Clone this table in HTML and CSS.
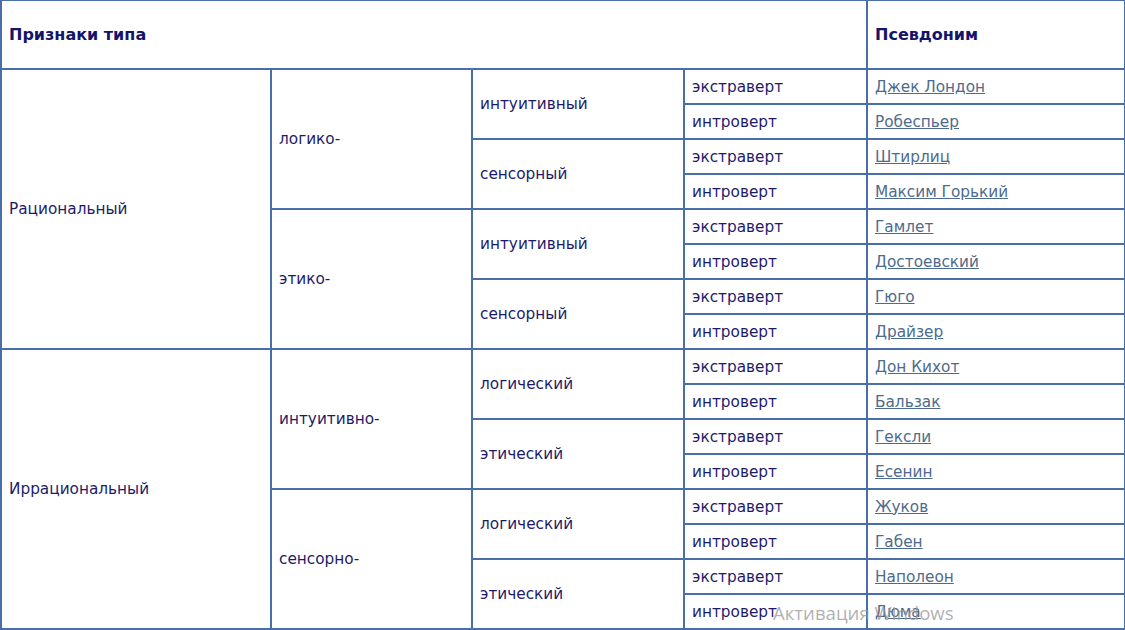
FILE: index.html
```html
<!DOCTYPE html>
<html lang="ru">
<head>
<meta charset="utf-8">
<link rel="stylesheet" href="styles.css">
</head>
<body>
<table class="types">
  <colgroup>
    <col class="c1"><col class="c2"><col class="c3"><col class="c4"><col class="c5">
  </colgroup>
  <tr class="head">
    <th colspan="4">Признаки типа</th>
    <th>Псевдоним</th>
  </tr>
  <tr>
    <td rowspan="8">Рациональный</td>
    <td rowspan="4">логико-</td>
    <td rowspan="2">интуитивный</td>
    <td>экстраверт</td><td><a href="#">Джек Лондон</a></td>
  </tr>
  <tr><td>интроверт</td><td><a href="#">Робеспьер</a></td></tr>
  <tr><td rowspan="2">сенсорный</td><td>экстраверт</td><td><a href="#">Штирлиц</a></td></tr>
  <tr><td>интроверт</td><td><a href="#">Максим Горький</a></td></tr>
  <tr><td rowspan="4">этико-</td><td rowspan="2">интуитивный</td><td>экстраверт</td><td><a href="#">Гамлет</a></td></tr>
  <tr><td>интроверт</td><td><a href="#">Достоевский</a></td></tr>
  <tr><td rowspan="2">сенсорный</td><td>экстраверт</td><td><a href="#">Гюго</a></td></tr>
  <tr><td>интроверт</td><td><a href="#">Драйзер</a></td></tr>
  <tr>
    <td rowspan="8">Иррациональный</td>
    <td rowspan="4">интуитивно-</td>
    <td rowspan="2">логический</td>
    <td>экстраверт</td><td><a href="#">Дон Кихот</a></td>
  </tr>
  <tr><td>интроверт</td><td><a href="#">Бальзак</a></td></tr>
  <tr><td rowspan="2">этический</td><td>экстраверт</td><td><a href="#">Гексли</a></td></tr>
  <tr><td>интроверт</td><td><a href="#">Есенин</a></td></tr>
  <tr><td rowspan="4">сенсорно-</td><td rowspan="2">логический</td><td>экстраверт</td><td><a href="#">Жуков</a></td></tr>
  <tr><td>интроверт</td><td><a href="#">Габен</a></td></tr>
  <tr><td rowspan="2">этический</td><td>экстраверт</td><td><a href="#">Наполеон</a></td></tr>
  <tr><td>интроверт</td><td><a href="#">Дюма</a></td></tr>
</table>
<div class="watermark">Активация Windows</div>
</body>
</html>
```
FILE: styles.css
```css
html, body {
  margin: 0;
  padding: 0;
  background: #ffffff;
}
body {
  position: relative;
  width: 1125px;
  height: 630px;
  overflow: hidden;
  font-family: "DejaVu Sans", Verdana, sans-serif;
  font-size: 15.3px;
  color: #1e1a6a;
}
.types {
  border-collapse: collapse;
  table-layout: fixed;
  width: 1124px;
  margin-top: -1px;
}
.c1 { width: 270px; }
.c2 { width: 201px; }
.c3 { width: 212px; }
.c4 { width: 183px; }
.c5 { width: 258px; }
.types th, .types td {
  border: 2px solid #4a6fa8;
  padding: 0 0 0 7px;
  text-align: left;
  vertical-align: middle;
  height: 33px;
}
.types tr.head th {
  height: 67px;
  font-size: 16px;
  font-weight: bold;
  color: #14146a;
}
.types a {
  color: #4d6b8c;
  text-decoration: underline;
}
.watermark {
  position: absolute;
  left: 773px;
  top: 600px;
  font-family: "Open Sans", "DejaVu Sans", sans-serif;
  font-size: 18.6px;
  color: rgba(150, 150, 150, 0.75);
  pointer-events: none;
}
```
